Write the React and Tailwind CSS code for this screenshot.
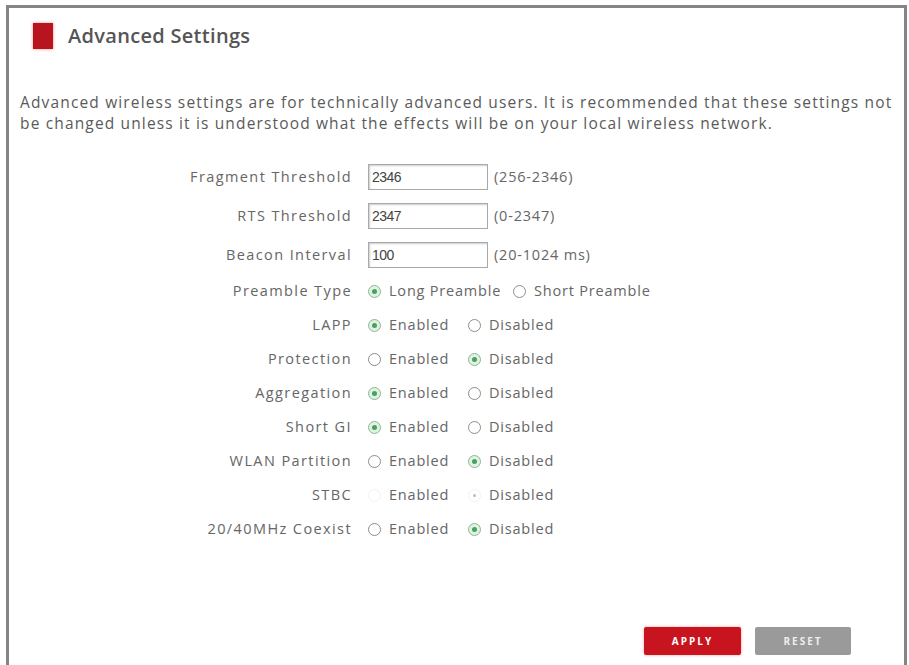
import React, { useState } from 'react';

const font = { fontFamily: '"Open Sans", "Liberation Sans", Arial, sans-serif' };

function Radio({ checked, disabled }) {
  if (disabled) {
    return (
      <span className="inline-flex items-center justify-center w-[13px] h-[13px] rounded-full border border-[#f2f2f2]">
        {checked && <span className="w-[3px] h-[3px] rounded-full bg-[#bbb]" />}
      </span>
    );
  }
  return (
    <span
      className={`inline-flex items-center justify-center w-[13px] h-[13px] rounded-full border ${
        checked ? 'border-[#86bb90] bg-[#e2f1e4]' : 'border-[#8d8d8d] bg-white'
      }`}
    >
      {checked && <span className="w-[5px] h-[5px] rounded-full bg-[#46a35b]" />}
    </span>
  );
}

function RadioPair({ value, disabled, first = 'Enabled', second = 'Disabled', gap = 'w-[100px]' }) {
  return (
    <div className="flex items-center">
      <label className={`flex items-center gap-[8px] ${gap}`}>
        <Radio checked={value === 0} disabled={disabled} />
        <span>{first}</span>
      </label>
      <label className="flex items-center gap-[8px]">
        <Radio checked={value === 1} disabled={disabled} />
        <span>{second}</span>
      </label>
    </div>
  );
}

const inputRows = [
  { label: 'Fragment Threshold', value: '2346', hint: '(256-2346)' },
  { label: 'RTS Threshold', value: '2347', hint: '(0-2347)' },
  { label: 'Beacon Interval', value: '100', hint: '(20-1024 ms)' },
];

const radioRows = [
  { label: 'LAPP', value: 0 },
  { label: 'Protection', value: 1 },
  { label: 'Aggregation', value: 0 },
  { label: 'Short GI', value: 0 },
  { label: 'WLAN Partition', value: 1 },
  { label: 'STBC', value: 1, disabled: true },
  { label: '20/40MHz Coexist', value: 1 },
];

const labelCls = 'flex items-center justify-end tracking-[1.4px]';

export default function App() {
  const [values] = useState(inputRows);

  return (
    <div className="w-[909px] h-[665px] bg-white overflow-hidden" style={font}>
      <div className="ml-[6px] mt-[5px] w-[901px] h-[662px] border-[3px] border-b-0 border-[#858585] flex flex-col">
        <div className="flex items-center pl-[24px] pt-[14px] gap-[15px]">
          <div className="w-[20px] h-[26px] bg-[#b8141f] shadow-[0_0_3px_#e88]" />
          <h1 className="text-[20px] leading-[28px] font-semibold text-[#555] tracking-[0.3px]">Advanced Settings</h1>
        </div>

        <p className="mt-[42px] px-[11px] text-[15.5px] leading-[21px] text-[#5a5a5a] tracking-[1.15px] whitespace-nowrap">
          Advanced wireless settings are for technically advanced users. It is recommended that these settings not
          <br />
          be changed unless it is understood what the effects will be on your local wireless network.
        </p>

        <div className="mt-[23px] grid grid-cols-[343px_1fr] gap-x-[16px] text-[14.5px] text-[#666] tracking-[0.8px]">
          {values.map((r) => (
            <React.Fragment key={r.label}>
              <div className={`h-[39px] ${labelCls}`}>{r.label}</div>
              <div className="h-[39px] flex items-center gap-[6px]">
                <input
                  readOnly
                  value={r.value}
                  className="w-[120px] h-[26px] border border-[#a9a9a9] shadow-[inset_1px_1px_2px_#ccc] px-[3px] text-[14px] text-[#444] outline-none tracking-[-0.5px]"
                  style={{ fontFamily: '"Liberation Sans", Arial, sans-serif' }}
                />
                <span>{r.hint}</span>
              </div>
            </React.Fragment>
          ))}

          <div className={`h-[34px] ${labelCls}`}>Preamble Type</div>
          <div className="h-[34px] flex items-center">
            <RadioPair value={0} first="Long Preamble" second="Short Preamble" gap="w-[145px]" />
          </div>

          {radioRows.map((r) => (
            <React.Fragment key={r.label}>
              <div className={`h-[34px] ${labelCls}`}>{r.label}</div>
              <div className="h-[34px] flex items-center">
                <RadioPair value={r.value} disabled={r.disabled} />
              </div>
            </React.Fragment>
          ))}
        </div>

        <div className="mt-auto mb-[12px] flex justify-end gap-[14px] pr-[53px]">
          <button className="w-[97px] h-[28px] rounded-[2px] bg-[#c8141f] text-white text-[10px] font-bold tracking-[2px] shadow-[0_0_3px_#f99]">
            APPLY
          </button>
          <button className="w-[96px] h-[28px] rounded-[2px] bg-[#9a9a9a] text-[#eee] text-[10px] font-bold tracking-[2px]">
            RESET
          </button>
        </div>
      </div>
    </div>
  );
}
